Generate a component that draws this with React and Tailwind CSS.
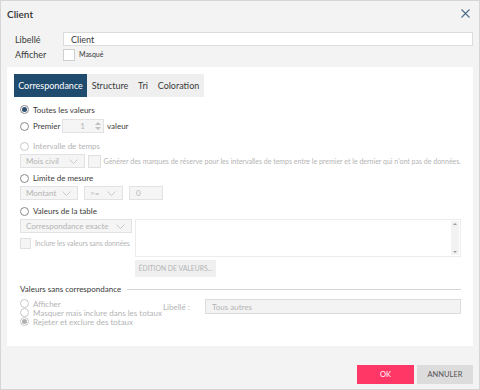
import React from 'react'

const font = { fontFamily: 'Lato, "Noto Sans", sans-serif' }

function Radio({ checked, disabled }) {
  return (
    <span
      className={`flex h-[9px] w-[9px] shrink-0 items-center justify-center rounded-full border bg-white ${
        disabled ? 'border-[#c8c8c8]' : 'border-[#8a8a8a]'
      }`}
    >
      {checked && <span className={`h-[5px] w-[5px] rounded-full ${disabled ? 'bg-[#b0b0b0]' : 'bg-[#2f4f6f]'}`} />}
    </span>
  )
}

function Chevron() {
  return (
    <svg width="9" height="5" viewBox="0 0 9 5" className="shrink-0">
      <path d="M0.5 0.5 L4.5 4.5 L8.5 0.5" fill="none" stroke="#c4c4c4" strokeWidth="0.9" />
    </svg>
  )
}

function Dropdown({ label, className }) {
  return (
    <div className={`flex h-[14px] items-center justify-between whitespace-nowrap border border-[#e2e2e2] bg-[#f5f5f5] pl-[5px] pr-[6px] text-[8px] text-[#b4b4b4] ${className}`}>
      <span>{label}</span>
      <Chevron />
    </div>
  )
}

export default function App() {
  return (
    <div style={font} className="flex h-[390px] w-[480px] flex-col border border-[#d6d6d6] bg-[#f3f3f3] leading-none text-[#3a3a3a]">
      {/* title bar */}
      <div className="flex h-[25px] items-center justify-between pl-[6px] pr-[9px]">
        <span className="text-[10px] font-semibold text-[#333]">Client</span>
        <svg width="9" height="9" viewBox="0 0 9 9">
          <path d="M0.5 0.5 L8.5 8.5 M8.5 0.5 L0.5 8.5" stroke="#4d6d8c" strokeWidth="1.1" />
        </svg>
      </div>

      {/* name + visibility */}
      <div className="flex flex-col pl-[14px] pr-[6px]">
        <div className="mt-[6px] flex h-[14px] items-center">
          <span className="w-[48px] text-[9px]">Libellé</span>
          <div className="flex h-[14px] flex-1 items-center border border-[#dcdcdc] bg-white pl-[7px] text-[9px]">Client</div>
        </div>
        <div className="mt-[2px] flex h-[13px] items-center">
          <span className="w-[48px] text-[9px]">Afficher</span>
          <span className="h-[12px] w-[12px] border border-[#cfcfcf] bg-white" />
          <span className="ml-[4px] text-[7px]">Masqué</span>
        </div>
      </div>

      {/* main panel */}
      <div className="mx-[6px] mt-[6px] flex h-[279px] flex-col bg-white pl-[7px] pr-[12px] pt-[7px]">
        <div className="flex h-[23px] w-[190px] items-stretch bg-[#efefef] text-[9px]">
          <div className="flex w-[73px] items-center justify-center bg-[#1f4b6e] text-white">Correspondance</div>
          <div className="flex w-[46px] items-center justify-center">Structure</div>
          <div className="flex w-[20px] items-center justify-center">Tri</div>
          <div className="flex w-[51px] items-center justify-center">Coloration</div>
        </div>

        <div className="flex flex-col pl-[6px] text-[8px]">
          <div className="mt-[6px] flex h-[13px] items-center gap-[4px]">
            <Radio checked />
            <span>Toutes les valeurs</span>
          </div>

          <div className="mt-[3px] flex h-[14px] items-center">
            <Radio />
            <span className="ml-[4px] w-[29px] whitespace-nowrap">Premier</span>
            <div className="flex h-[14px] w-[42px] items-center justify-end border border-[#e2e2e2] bg-[#f5f5f5] text-[#b4b4b4]">
              <span className="mr-[8px]">1</span>
              <div className="flex h-full w-[10px] flex-col items-center justify-center gap-[2px]">
                <span className="h-0 w-0 border-x-[3px] border-b-[3px] border-x-transparent border-b-[#c0c0c0]" />
                <span className="h-0 w-0 border-x-[3px] border-t-[3px] border-x-transparent border-t-[#c0c0c0]" />
              </div>
            </div>
            <span className="ml-[3px]">valeur</span>
          </div>

          <div className="mt-[7px] flex h-[12px] items-center gap-[4px] text-[#b4b4b4]">
            <Radio disabled />
            <span>Intervalle de temps</span>
          </div>

          <div className="mt-[2px] flex h-[14px] items-center">
            <Dropdown label="Mois civil" className="w-[68px]" />
            <span className="ml-[3px] h-[13px] w-[13px] shrink-0 border border-[#e0e0e0] bg-[#f5f5f5]" />
            <span className="ml-[3px] whitespace-nowrap text-[7px] text-[#b4b4b4]">
              Générer des marques de réserve pour les intervalles de temps entre le premier et le dernier qui n'ont pas de données.
            </span>
          </div>

          <div className="mt-[4px] flex h-[12px] items-center gap-[4px]">
            <Radio />
            <span>Limite de mesure</span>
          </div>

          <div className="mt-[2px] flex h-[14px] items-center">
            <Dropdown label="Montant" className="w-[58px]" />
            <Dropdown label=">=" className="ml-[6px] w-[39px]" />
            <div className="ml-[6px] flex h-[14px] w-[34px] items-center border border-[#e2e2e2] bg-[#f5f5f5] pl-[6px] text-[#b4b4b4]">0</div>
          </div>

          <div className="mt-[5px] flex h-[12px] items-center gap-[4px]">
            <Radio />
            <span>Valeurs de la table</span>
          </div>

          <div className="mt-[2px] flex items-start">
            <div className="flex w-[112px] shrink-0 flex-col">
              <Dropdown label="Correspondance exacte" className="w-[112px]" />
              <div className="mt-[5px] flex h-[10px] items-center">
                <span className="h-[11px] w-[11px] shrink-0 border border-[#e0e0e0] bg-[#f5f5f5]" />
                <span className="ml-[4px] whitespace-nowrap text-[6.8px] text-[#b4b4b4]">Inclure les valeurs sans données</span>
              </div>
            </div>
            <div className="flex flex-1 flex-col pl-[3px]">
              <div className="flex h-[38px] border border-[#ececec] bg-white">
                <div className="flex-1" />
                <div className="my-[1px] mr-[1px] flex w-[8px] flex-col items-center justify-between bg-[#f2f2f2] py-[2px]">
                  <span className="h-0 w-0 border-x-[2px] border-b-[2px] border-x-transparent border-b-[#9a9a9a]" />
                  <span className="h-0 w-0 border-x-[2px] border-t-[2px] border-x-transparent border-t-[#9a9a9a]" />
                </div>
              </div>
              <div className="mt-[3px] flex h-[17px] w-[81px] items-center justify-center whitespace-nowrap bg-[#f0f0f0] text-[6.8px] text-[#b4b4b4]">
                ÉDITION DE VALEURS...
              </div>
            </div>
          </div>

          <div className="mt-[6px] flex h-[12px] items-center">
            <span className="whitespace-nowrap">Valeurs sans correspondance</span>
            <div className="ml-[6px] h-px flex-1 bg-[#d4d4d4]" />
          </div>

          <div className="mt-[4px] flex items-start text-[#b4b4b4]">
            <div className="flex w-[141px] shrink-0 flex-col text-[8px]">
              <div className="flex h-[9px] items-center gap-[4px]">
                <Radio disabled />
                <span>Afficher</span>
              </div>
              <div className="flex h-[9px] items-center gap-[4px]">
                <Radio disabled />
                <span className="whitespace-nowrap">Masquer mais inclure dans les totaux</span>
              </div>
              <div className="flex h-[9px] items-center gap-[4px]">
                <Radio checked disabled />
                <span className="whitespace-nowrap">Rejeter et exclure des totaux</span>
              </div>
            </div>
            <div className="flex flex-1 items-center">
              <span className="w-[44px] whitespace-nowrap pl-[2px]">Libellé :</span>
              <div className="flex h-[15px] flex-1 items-center border border-[#dcdcdc] bg-[#f3f3f3] pl-[6px]">Tous autres</div>
            </div>
          </div>
        </div>
      </div>

      {/* footer buttons */}
      <div className="mt-[19px] flex justify-end gap-[3px] pr-[6px]">
        <div className="flex h-[19px] w-[57px] items-center justify-center bg-[#ff3767] text-[7.5px] text-white">OK</div>
        <div className="flex h-[19px] w-[56px] items-center justify-center bg-[#dcdcdc] text-[7.5px] text-[#555]">ANNULER</div>
      </div>
    </div>
  )
}
